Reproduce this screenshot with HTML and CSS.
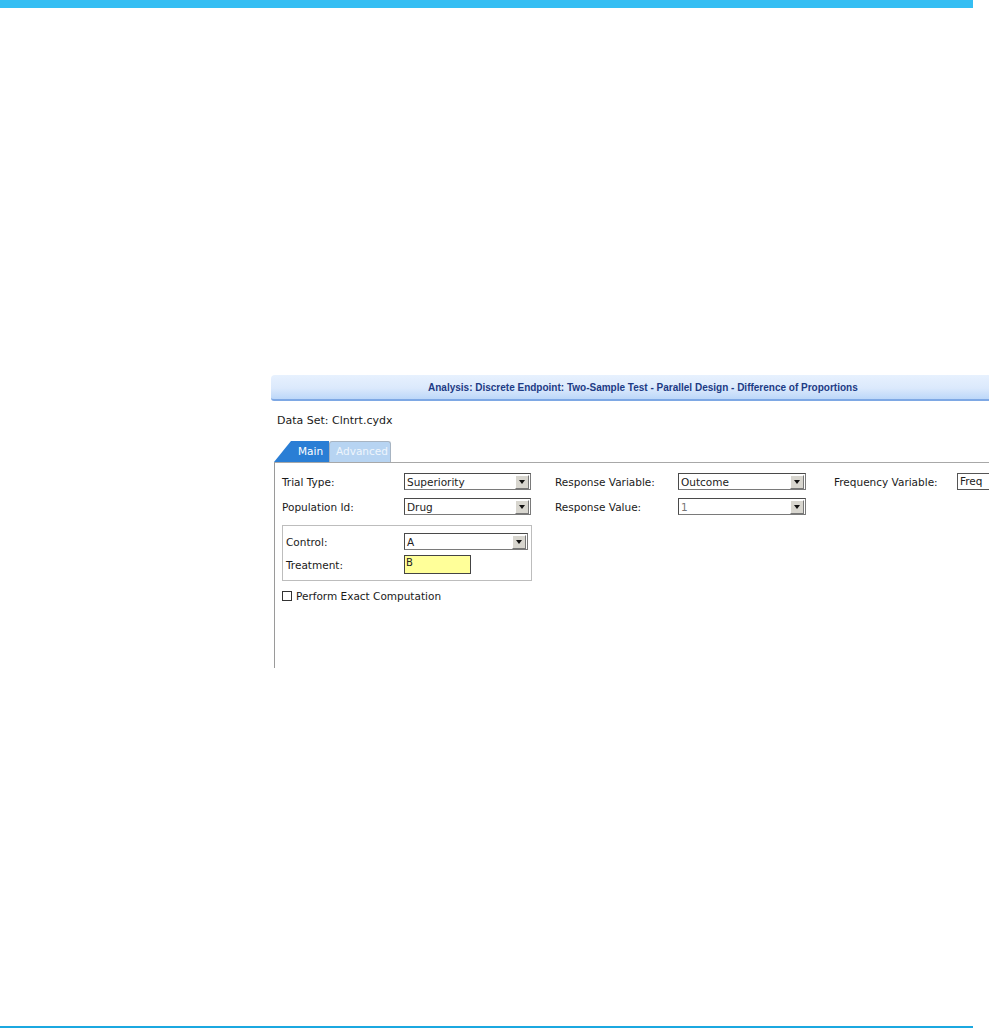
FILE: index.html
```html
<!DOCTYPE html>
<html lang="en">
<head>
    <meta charset="UTF-8">
    <meta name="viewport" content="width=device-width, initial-scale=1.0">
    <title>Analysis</title>
    <link rel="stylesheet" href="styles.css">
</head>
<body>
<div class="page">
    <div class="top-bar"></div>

    <div class="panel">
        <div class="panel-header">Analysis: Discrete Endpoint: Two-Sample Test - Parallel Design - Difference of Proportions</div>
        <div class="data-set">Data Set: Clntrt.cydx</div>

        <div class="tabs">
            <div class="tab tab-main">Main</div>
            <div class="tab tab-advanced">Advanced</div>
        </div>

        <div class="tab-body">
            <div class="row">
                <div class="label">Trial Type:</div>
                <div class="select"><span class="value">Superiority</span><span class="arrow"></span></div>
                <div class="label label-mid">Response Variable:</div>
                <div class="select select-wide"><span class="value">Outcome</span><span class="arrow"></span></div>
                <div class="label label-far">Frequency Variable:</div>
                <div class="text-input">Freq</div>
            </div>
            <div class="row">
                <div class="label">Population Id:</div>
                <div class="select"><span class="value">Drug</span><span class="arrow"></span></div>
                <div class="label label-mid">Response Value:</div>
                <div class="select select-wide disabled"><span class="value">1</span><span class="arrow"></span></div>
            </div>

            <div class="group-box">
                <div class="row row-tight">
                    <div class="label label-inner">Control:</div>
                    <div class="select select-inner"><span class="value">A</span><span class="arrow"></span></div>
                </div>
                <div class="row row-tight">
                    <div class="label label-inner">Treatment:</div>
                    <div class="yellow-input">B</div>
                </div>
            </div>

            <label class="check">
                <span class="box"></span>
                Perform Exact Computation
            </label>
        </div>
    </div>

    <div class="bottom-line"></div>
</div>
</body>
</html>
```

FILE: styles.css
```css
html, body {
    margin: 0;
    padding: 0;
    overflow: hidden;
    background: #fff;
}
body {
    font-family: 'DejaVu Sans', Verdana, sans-serif;
    font-size: 10.5px;
    color: #222;
}
.page {
    height: 1029px;
    width: 989px;
    display: flex;
    flex-direction: column;
    overflow: hidden;
}
.top-bar {
    width: 973px;
    height: 8px;
    background-color: #35bef3;
    flex-shrink: 0;
}
.panel {
    margin-top: 367px;
    margin-left: 271px;
    width: 760px;
    flex-shrink: 0;
}
.panel-header {
    height: 24px;
    line-height: 25px;
    padding-left: 157px;
    background: linear-gradient(#e7f1fe, #dbe9fc 55%, #bcd7f9);
    border-bottom: 2px solid #7ea8e4;
    border-radius: 4px 0 0 3px;
    font-family: 'Liberation Sans', Arial, sans-serif;
    font-size: 10px;
    font-weight: bold;
    color: #1d3b85;
    white-space: nowrap;
}
.data-set {
    margin-top: 13px;
    padding-left: 6px;
    font-size: 11px;
    color: #1a1a1a;
}
.tabs {
    display: flex;
    margin-top: 14px;
    margin-left: 3px;
    height: 21px;
}
.tab {
    height: 21px;
    line-height: 21px;
    font-size: 10.5px;
    box-sizing: border-box;
    white-space: nowrap;
}
.tab-main {
    width: 55px;
    padding-left: 24px;
    background-color: #2a7ed5;
    color: #fff;
    clip-path: polygon(17px 0, 100% 0, 100% 100%, 0 100%);
}
.tab-advanced {
    width: 62px;
    padding-left: 6px;
    background-color: #b7d4f2;
    color: #eef5fc;
    border: 1px solid #a7b4c2;
    border-bottom: none;
    border-radius: 3px 3px 0 0;
    line-height: 19px;
    overflow: hidden;
}
.tab-body {
    margin-left: 3px;
    height: 206px;
    border-left: 1px solid #9a9a9a;
    border-top: 1px solid #a8a8a8;
    padding: 10px 0 0 7px;
    box-sizing: border-box;
}
.row {
    display: flex;
    align-items: center;
    height: 17px;
    margin-bottom: 8px;
}
.label {
    width: 122px;
    flex-shrink: 0;
    color: #1a1a1a;
    white-space: nowrap;
}
.label-mid {
    margin-left: 24px;
    width: 123px;
}
.label-far {
    margin-left: 28px;
    width: 123px;
}
.select {
    width: 127px;
    height: 17px;
    box-sizing: border-box;
    border: 1px solid #7a7a7a;
    border-top-color: #4a4a4a;
    border-left-color: #4a4a4a;
    display: flex;
    align-items: center;
    background: #fff;
    flex-shrink: 0;
}
.select-wide {
    width: 128px;
}
.select .value {
    flex: 1;
    padding-left: 2px;
    white-space: nowrap;
    font-size: 10.5px;
}
.disabled .value {
    color: #777;
}
.arrow {
    width: 14px;
    height: 14px;
    margin-right: 1px;
    box-sizing: border-box;
    background: #d8d6cf;
    border: 1px solid #fff;
    border-right-color: #777;
    border-bottom-color: #777;
    position: relative;
}
.arrow::after {
    content: '';
    position: absolute;
    left: 3px;
    top: 4px;
    border-left: 3.5px solid transparent;
    border-right: 3.5px solid transparent;
    border-top: 4px solid #111;
}
.text-input {
    width: 60px;
    height: 17px;
    box-sizing: border-box;
    border: 1px solid #555;
    padding-left: 2px;
    line-height: 15px;
    flex-shrink: 0;
}
.group-box {
    width: 250px;
    height: 56px;
    box-sizing: border-box;
    border: 1px solid #bdbdbd;
    padding: 7px 0 0 3px;
    margin-top: 10px;
}
.row-tight {
    margin-bottom: 6px;
}
.label-inner {
    width: 118px;
}
.select-inner {
    width: 124px;
}
.yellow-input {
    width: 67px;
    height: 19px;
    box-sizing: border-box;
    border: 1px solid #444;
    background-color: #ffff99;
    padding-left: 1px;
    line-height: 13px;
    font-size: 10px;
    align-self: flex-start;
    margin-top: -1px;
}
.check {
    display: flex;
    align-items: center;
    margin-top: 9px;
    color: #1a1a1a;
}
.check .box {
    width: 8px;
    height: 8px;
    border: 1px solid #333;
    margin-right: 4px;
}
.bottom-line {
    margin-top: auto;
    margin-bottom: 1px;
    width: 973px;
    height: 2px;
    background-color: #1ba8e0;
    flex-shrink: 0;
}
```
